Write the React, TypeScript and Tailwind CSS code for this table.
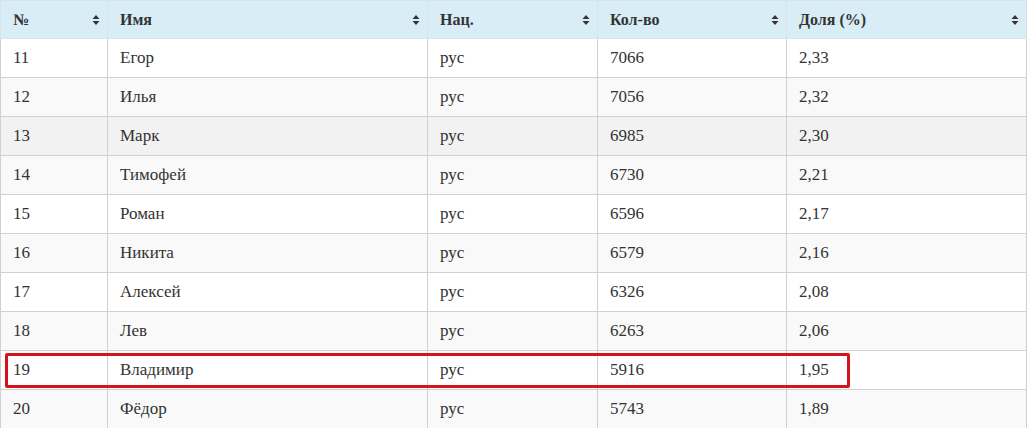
const columns = [
    { label: "№", width: "w-[107px]" },
    { label: "Имя", width: "w-[320px]" },
    { label: "Нац.", width: "w-[170px]" },
    { label: "Кол-во", width: "w-[189px]" },
    { label: "Доля (%)", width: "w-[240px]" },
] as const;

const rows = [
    ["11", "Егор", "рус", "7066", "2,33"],
    ["12", "Илья", "рус", "7056", "2,32"],
    ["13", "Марк", "рус", "6985", "2,30"],
    ["14", "Тимофей", "рус", "6730", "2,21"],
    ["15", "Роман", "рус", "6596", "2,17"],
    ["16", "Никита", "рус", "6579", "2,16"],
    ["17", "Алексей", "рус", "6326", "2,08"],
    ["18", "Лев", "рус", "6263", "2,06"],
    ["19", "Владимир", "рус", "5916", "1,95"],
    ["20", "Фёдор", "рус", "5743", "1,89"],
];

function SortIcon() {
    return (
        <svg width="8" height="12" viewBox="0 0 8 12" className="shrink-0 text-[#333]">
            <path d="M0.5 5 L4 1 L7.5 5 Z" fill="currentColor" />
            <path d="M0.5 7 L4 11 L7.5 7 Z" fill="currentColor" />
        </svg>
    );
}

export default function App() {
    const rowClass = (i: number) => {
        if (i === 2) return "bg-[#f2f2f2]";
        return i % 2 === 1 ? "bg-[#f9f9f9]" : "bg-white";
    };

    return (
        <div className="relative w-[1030px] h-[428px] overflow-hidden bg-white font-['Liberation_Serif',serif] text-[#333]">
            <table className="w-[1027px] table-fixed border-collapse border border-[#d0d0d0]">
                <thead>
                    <tr className="h-[38px] bg-[#d9edf7]">
                        {columns.map(({ label, width }) => (
                            <th
                                key={label}
                                className={`${width} border border-[#d6e4ec] pl-3 pr-[7px] text-left text-[16px] font-bold`}
                            >
                                <div className="flex items-center justify-between">
                                    <span>{label}</span>
                                    <SortIcon />
                                </div>
                            </th>
                        ))}
                    </tr>
                </thead>
                <tbody>
                    {rows.map((row, i) => (
                        <tr key={row[0]} className={`h-[39px] ${rowClass(i)}`}>
                            {row.map((cell, j) => (
                                <td key={j} className="border border-[#d0d0d0] px-3 text-[17px]">
                                    {cell}
                                </td>
                            ))}
                        </tr>
                    ))}
                </tbody>
            </table>

            <div className="absolute left-[5px] top-[353px] w-[845px] h-[35px] border-[3px] border-[#d3141c] rounded-[2px]" />
        </div>
    );
}
